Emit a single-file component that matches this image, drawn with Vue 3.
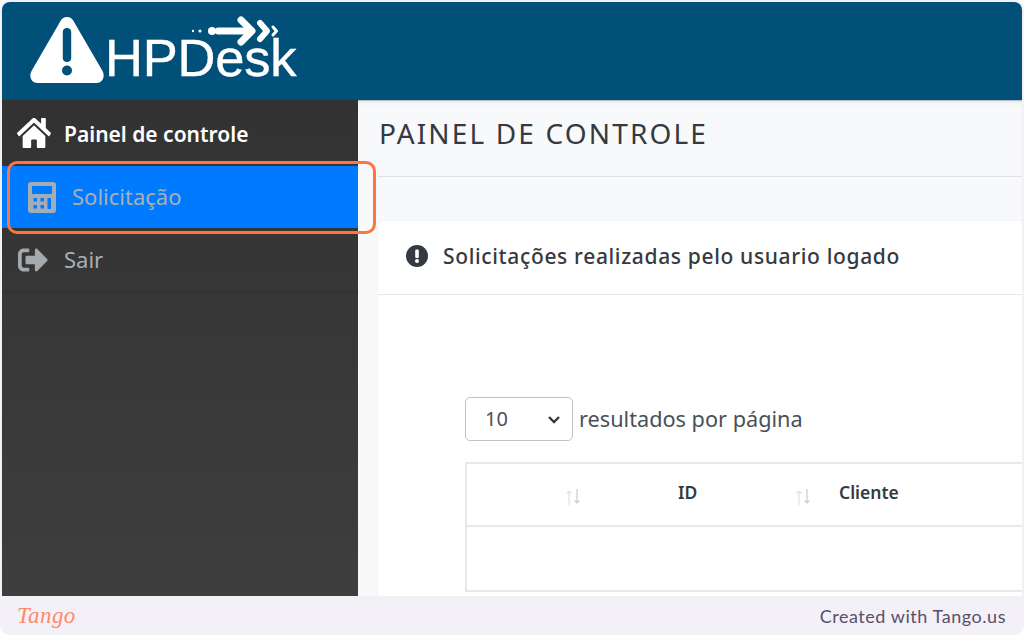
<script setup>
const cols = [
  { label: 'ID', cls: 'th-id' },
  { label: 'Cliente', cls: 'th-cli' }
]
</script>

<template>
  <div class="page">
    <div class="window">
      <header class="top">
        <div class="logo">
          <svg class="tri" width="76" height="68" viewBox="0 0 76 68">
            <path fill="#fff" fill-rule="evenodd" d="M38 1c3 0 5 1.500 6.500 4L73.500 55c3 5.500 0 12-6 12H8.500c-6 0-9-6.500-6-12L31.500 5C33 2.500 35 1 38 1Zm-4.200 15v26c0 2.500 1.800 4 4.200 4s4.200-1.500 4.200-4V16c0-2.500-1.800-4-4.200-4s-4.200 1.500-4.200 4ZM38 49.500a5 5 0 1 0 0 10 5 5 0 0 0 0-10Z" />
          </svg>
          <span class="wordmark">HPDesk</span>
          <svg class="arrow" width="92" height="32" viewBox="0 0 92 32">
            <g fill="#fff">
              <circle cx="3" cy="16" r="1.200" /><circle cx="10" cy="16" r="1.600" />
              <circle cx="22" cy="16" r="4" />
              <rect x="25" y="12.500" width="32" height="7" rx="3" />
            </g>
            <g fill="none" stroke="#fff" stroke-linecap="round" stroke-linejoin="round">
              <path d="M51 5l11 11-11 11" stroke-width="7" />
              <path d="M70 8l7 8-7 8" stroke-width="6" />
              <path d="M83 12l3.500 4-3.500 4" stroke-width="3" />
            </g>
          </svg>
        </div>
      </header>
      <div class="body">
        <aside class="side">
          <a class="item item-home">
            <svg class="ico" width="34" height="30" viewBox="0 32 576 448" preserveAspectRatio="none"><path fill="#fff" d="M280.400 148.300 96 300.100V464a16 16 0 0 0 16 16l112.100-.3a16 16 0 0 0 15.900-16V368a16 16 0 0 1 16-16h64a16 16 0 0 1 16 16v95.600a16 16 0 0 0 16 16.100L464 480a16 16 0 0 0 16-16V300L295.700 148.300a12.200 12.200 0 0 0-15.300 0ZM571.600 251.500 488 182.600V44.100a12 12 0 0 0-12-12h-56a12 12 0 0 0-12 12v72.600L318.500 43a48 48 0 0 0-61 0L4.300 251.500a12 12 0 0 0-1.600 16.900l25.500 31A12 12 0 0 0 45.200 301l235.200-193.700a12.200 12.200 0 0 1 15.300 0L530.900 301a12 12 0 0 0 16.900-1.600l25.500-31a12 12 0 0 0-1.700-16.900Z" /></svg>
            <span class="lbl">Painel de controle</span>
          </a>
          <a class="item item-active">
            <svg class="ico-calc" width="28" height="31" viewBox="0 0 28 31"><path fill="#a3adb8" fill-rule="evenodd" d="M3 0h22a3 3 0 0 1 3 3v25a3 3 0 0 1-3 3H3a3 3 0 0 1-3-3V3a3 3 0 0 1 3-3Zm1 4v8h20V4H4Zm1.500 12v3.500h3.500V16H5.500Zm7 0v3.500H16V16h-3.500Zm7 0v11H23V16h-3.500ZM5.500 23v3.500H9V23H5.500Zm7 0v3.500H16V23h-3.500Z" /></svg>
            <span class="lbl">Solicitação</span>
          </a>
          <a class="item item-exit">
            <svg class="ico" width="30" height="24" viewBox="0 56 512 400" preserveAspectRatio="none"><path fill="#a3a9af" d="M497 273 329 441c-15 15-41 4.500-41-17v-96H152c-13.300 0-24-10.700-24-24v-96c0-13.300 10.700-24 24-24h136V88c0-21.400 25.900-32 41-17l168 168c9.300 9.400 9.300 24.600 0 34ZM192 436v-40c0-6.600-5.400-12-12-12H96c-17.700 0-32-14.300-32-32V160c0-17.700 14.300-32 32-32h84c6.600 0 12-5.400 12-12V76c0-6.600-5.400-12-12-12H96c-53 0-96 43-96 96v192c0 53 43 96 96 96h84c6.600 0 12-5.400 12-12Z" /></svg>
            <span class="lbl">Sair</span>
          </a>
        </aside>
        <main class="main">
          <h1 class="title">PAINEL DE CONTROLE</h1>
          <hr class="rule" />
          <section class="card">
            <div class="card-head">
              <svg width="22" height="22" viewBox="0 0 22 22"><circle cx="11" cy="11" r="11" fill="#343a40" /><rect x="9.200" y="4.500" width="3.600" height="8.500" rx="1.200" fill="#fff" /><circle cx="11" cy="16" r="2" fill="#fff" /></svg>
              <span>Solicitações realizadas pelo usuario logado</span>
            </div>
            <div class="card-body">
              <div class="length">
                <div class="select"><span>10</span><svg width="14" height="9" viewBox="0 0 14 9"><path d="M2 2l5 5 5-5" fill="none" stroke="#343a40" stroke-width="2.400" /></svg></div>
                <span class="length-lbl">resultados por página</span>
              </div>
              <div class="table">
                <div class="thead">
                  <div v-for="c in cols" :key="c.label" class="th" :class="c.cls">
                    <span class="th-text">{{ c.label }}</span>
                    <svg class="sort" width="18" height="18" viewBox="0 0 18 18"><path d="M5 17V3M2.500 5.500 5 3l2.500 2.500" fill="none" stroke="#dfe2e5" stroke-width="1.200" /><path d="M13 1v14M10.500 12.500 13 15l2.500-2.500" fill="none" stroke="#c9cdd1" stroke-width="1.200" /></svg>
                  </div>
                </div>
                <div class="tbody"></div>
              </div>
            </div>
          </section>
        </main>
      </div>
    </div>
    <footer class="foot">
      <span class="tango">Tango</span>
      <span class="created">Created with Tango.us</span>
    </footer>
    <div class="mark"></div>
  </div>
</template>

<style>
html, body { margin: 0; padding: 0; background: #fff; }
</style>

<style scoped>
.page {
  position: relative;
  width: 1024px;
  height: 635px;
  overflow: hidden;
  background: #f3f0f7;
  border-radius: 10px;
  font-family: "Noto Sans", "Open Sans", sans-serif;
  display: flex;
  flex-direction: column;
}
.window {
  margin: 2px 2px 0;
  height: 594px;
  border-radius: 8px 8px 0 0;
  overflow: hidden;
  display: flex;
  flex-direction: column;
  flex: none;
}
.top {
  height: 98px;
  flex: none;
  background: #005079;
  display: flex;
  align-items: flex-start;
}
.logo {
  position: relative;
  margin: 13px 0 0 27px;
  display: flex;
  align-items: flex-end;
  height: 70px;
}
.tri { display: block; margin-bottom: 1px; flex: none; }
.wordmark {
  font-family: "Liberation Sans", sans-serif;
  color: #fff;
  font-size: 52.500px;
  line-height: 1;
  letter-spacing: -0.2px;
  -webkit-text-stroke: 0.4px #fff;
  transform: translateY(-1px);
}
.arrow { position: absolute; left: 161px; top: 0; }
.body { flex: 1; display: flex; min-height: 0; }
.side {
  width: 356px;
  flex: none;
  background: linear-gradient(#323232, #3e3e3e);
  display: flex;
  flex-direction: column;
}
.item {
  display: flex;
  align-items: center;
  box-sizing: border-box;
  color: #a9afb5;
  font-size: 22px;
}
.item-home { height: 66px; padding: 0 0 0 15px; color: #fff; font-size: 21px; font-weight: 600; }
.item-active { height: 62px; padding: 0 0 0 26px; background: #007bff; }
.item-exit { height: 65px; padding: 0 0 0 16px; border-bottom: 1px solid #303030; }
.ico { flex: none; }
.item-home .lbl { margin-left: 13px; padding-top: 1px; }
.ico-calc { flex: none; }
.item-active .lbl { margin-left: 16px; padding-bottom: 2px; }
.item-exit .lbl { margin-left: 16px; padding-bottom: 2px; }
.main {
  flex: 1;
  min-width: 0;
  background: #f8f9fb;
  padding: 0 0 0 20px;
  box-shadow: inset 0 1px 0 #b4bdc8, inset 0 5px 5px -3px #e2e5e9;
}
.title {
  margin: 0;
  height: 76px;
  box-sizing: border-box;
  padding: 13px 0 0 1px;
  font-size: 28px;
  line-height: 40px;
  font-weight: 400;
  letter-spacing: 2.150px;
  color: #343a40;
}
.rule { margin: 0; border: 0; height: 1px; background: #dee2e6; }
.card {
  margin-top: 44px;
  background: #fff;
  border-radius: 5px 0 0 0;
  height: 400px;
  box-shadow: 0 0 1px rgba(0, 0, 0, 0.2);
}
.card-head {
  height: 74px;
  box-sizing: border-box;
  border-bottom: 1px solid #e3e6ea;
  display: flex;
  align-items: center;
  gap: 15px;
  padding: 0 0 3px 28px;
  font-size: 21px;
  font-weight: 500;
  letter-spacing: 0.650px;
  color: #343a40;
}
.card-body { padding: 102px 0 0 87px; }
.length { display: flex; align-items: center; gap: 6px; }
.select {
  width: 108px;
  height: 44px;
  box-sizing: border-box;
  border: 1.500px solid #bcc3ca;
  border-radius: 5px;
  display: flex;
  align-items: center;
  justify-content: space-between;
  padding: 0 11px 0 19px;
  font-size: 20px;
  color: #495057;
}
.select span { padding-bottom: 2px; }
.length-lbl { font-size: 21.700px; color: #495057; padding-bottom: 2px; }
.table {
  margin-top: 21px;
  border: 2px solid #e5e8ec;
  border-right: 0;
  height: 130px;
  box-sizing: border-box;
}
.thead {
  height: 63px;
  box-sizing: border-box;
  border-bottom: 2px solid #e5e8ec;
  display: flex;
  align-items: center;
  color: #343a40;
  font-size: 17.500px;
  font-weight: 600;
}
.th { display: flex; align-items: center; position: relative; }
.th-text { padding-bottom: 6px; }
.th-id { width: 218px; padding-left: 211px; box-sizing: border-box; }
.th-cli { padding-left: 154px; }
.th .sort { position: absolute; top: 50%; margin-top: -7px; }
.th-id .sort { left: 97px; }
.th-cli .sort { left: 109px; }
.foot {
  flex: 1;
  display: flex;
  align-items: center;
  justify-content: space-between;
  padding: 0 18px 0 17px;
}
.tango {
  position: relative;
  font-family: "Liberation Serif", serif;
  font-style: italic;
  font-size: 23px;
  color: #ff8a6a;
  letter-spacing: 0.4px;
}
.created {
  font-family: "Lato", sans-serif;
  font-size: 18px;
  letter-spacing: 0.55px;
  color: #5a4f6a;
}
.mark {
  position: absolute;
  left: 7px;
  top: 161px;
  width: 369px;
  height: 73px;
  box-sizing: border-box;
  border: 3px solid #ff7340;
  border-radius: 10px;
}
</style>
